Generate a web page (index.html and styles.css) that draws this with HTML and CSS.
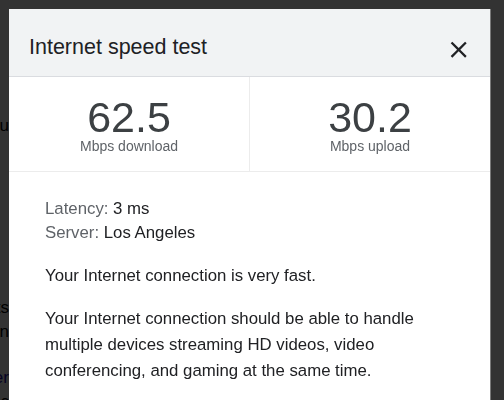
FILE: index.html
```html
<!DOCTYPE html>
<html lang="en">
<head>
<meta charset="utf-8">
<title>Internet speed test</title>
<link rel="stylesheet" href="styles.css">
</head>
<body>
<div class="page">
  <div class="page-line l1"><span>menu</span></div>
  <div class="page-line l2"><span>results</span></div>
  <div class="page-line l3"><span>connection</span></div>
  <div class="page-line l4 link"><span>Speedtester</span></div>
  <div class="page-line l5"><span>c</span></div>
</div>
<div class="scrim"></div>
<div class="dialog" role="dialog" aria-label="Internet speed test">
  <div class="dialog-header">
    <h1 class="dialog-title">Internet speed test</h1>
    <button class="close" aria-label="Close">
      <svg viewBox="0 0 24 24" width="27.4" height="27.4"><path d="M19 6.41L17.59 5 12 10.59 6.41 5 5 6.41 10.59 12 5 17.59 6.41 19 12 13.41 17.59 19 19 17.59 13.41 12z" fill="#202124"/></svg>
    </button>
  </div>
  <div class="stats">
    <div class="stat">
      <div class="stat-value">62.5</div>
      <div class="stat-label">Mbps download</div>
    </div>
    <div class="stat">
      <div class="stat-value">30.2</div>
      <div class="stat-label">Mbps upload</div>
    </div>
  </div>
  <div class="details">
    <div class="meta">
      <div><span class="meta-label">Latency:</span> 3 ms</div>
      <div><span class="meta-label">Server:</span> Los Angeles</div>
    </div>
    <p class="para">Your Internet connection is very fast.</p>
    <p class="para">Your Internet connection should be able to handle multiple devices streaming HD videos, video conferencing, and gaming at the same time.</p>
  </div>
</div>
</body>
</html>
```
FILE: styles.css
```css
html, body {
  margin: 0;
  padding: 0;
  height: 100%;
  overflow: hidden;
}
body {
  background: #ffffff;
  font-family: "Liberation Sans", Arial, sans-serif;
  color: #202124;
}
.page {
  width: 9px;
  padding-top: 116px;
  display: flex;
  flex-direction: column;
  overflow: hidden;
}
.page-line {
  display: flex;
  justify-content: flex-end;
  white-space: nowrap;
  font-size: 17px;
  line-height: 20px;
  color: #000;
}
.page-line.link { color: #1a0dab; }
.l1 { margin-top: 0; }
.l2 { margin-top: 162px; }
.l3 { margin-top: 4px; }
.l4 { margin-top: 26px; }
.l5 { margin-top: 4px; }
.scrim {
  position: fixed;
  inset: 0;
  background: rgba(0, 0, 0, 0.8);
}
.dialog {
  position: absolute;
  left: 9px;
  top: 9px;
  width: 481px;
  height: 420px;
  background: #fff;
  box-shadow: 1px 0 0 rgba(255, 255, 255, 0.35);
}
.dialog-header {
  display: flex;
  justify-content: space-between;
  align-items: flex-start;
  box-sizing: border-box;
  height: 68px;
  padding: 28px 18px 0 20px;
  background: #f1f3f4;
  border-bottom: 1px solid #dadce0;
}
.dialog-title {
  margin: 0;
  font-size: 21.5px;
  line-height: 21.5px;
  font-weight: 400;
  color: #202124;
}
.close {
  margin: -1px 0 0 0;
  padding: 0;
  border: 0;
  background: none;
  display: block;
  line-height: 0;
}
.stats {
  display: grid;
  grid-template-columns: 240px 1fr;
  border-bottom: 1px solid #ececec;
}
.stat {
  display: flex;
  flex-direction: column;
  align-items: center;
  padding: 20px 0 17px;
}
.stat + .stat {
  border-left: 1px solid #ececec;
}
.stat-value {
  font-size: 43px;
  line-height: 41px;
  color: #3c4043;
}
.stat-label {
  font-size: 14px;
  line-height: 16px;
  color: #5f6368;
}
.details {
  padding: 25px 50px 0 36px;
  font-size: 16.8px;
}
.meta {
  line-height: 24px;
}
.meta-label {
  color: #5f6368;
}
.para {
  margin: 18px 0 0;
  line-height: 26px;
}
.para + .para {
  margin-top: 17px;
}
```
